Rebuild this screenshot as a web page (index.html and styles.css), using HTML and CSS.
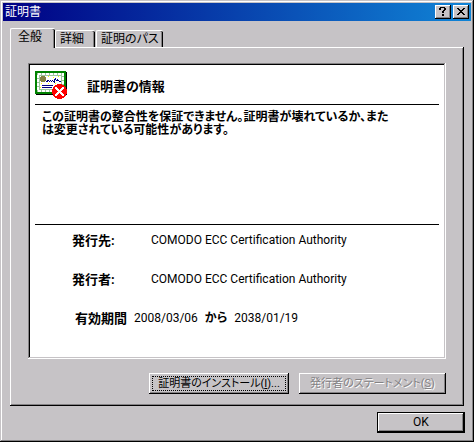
FILE: index.html
```html
<!DOCTYPE html>
<html lang="ja">
<head>
    <meta charset="UTF-8">
    <meta name="viewport" content="width=device-width, initial-scale=1.0">
    <title>証明書</title>
    <link rel="stylesheet" href="styles.css">
</head>
<body>
    <div class="window">
        <header class="titlebar">
            <h1>証明書</h1>
            <button type="button" class="caption-button" aria-label="ヘルプ">
                <svg width="7" height="9" viewBox="0 0 7 9" shape-rendering="crispEdges"><path d="M1 0h5v1H1zM0 1h2v2H0zM5 1h2v2H5zM4 3h2v1H4zM3 4h2v2H3zM3 7h2v2H3z"/></svg>
            </button>
            <button type="button" class="caption-button" aria-label="閉じる">
                <svg width="8" height="7" viewBox="0 0 8 7" shape-rendering="crispEdges"><path d="M0 0h2v1H0zM6 0h2v1H6zM1 1h2v1H1zM5 1h2v1H5zM2 2h4v1H2zM3 3h2v1H3zM2 4h4v1H2zM1 5h2v1H1zM5 5h2v1H5zM0 6h2v1H0zM6 6h2v1H6z"/></svg>
            </button>
        </header>

        <div class="content">
            <div class="tabs" role="tablist">
                <button type="button" class="tab active" role="tab" aria-selected="true">全般</button>
                <button type="button" class="tab" role="tab" aria-selected="false">詳細</button>
                <button type="button" class="tab" role="tab" aria-selected="false">証明のパス</button>
            </div>

            <div class="pane" role="tabpanel">
                <div class="certificate">
                    <div class="certificate-header">
                        <svg class="certificate-icon" width="32" height="28" viewBox="0 0 32 28" shape-rendering="crispEdges">
                            <path fill="#000" d="M1 1h31v23H1z"/>
                            <path fill="#008200" d="M0 0h31v23H0z"/>
                            <path fill="#9cc69c" d="M2 2h27v19H2z"/>
                            <path fill="none" stroke="#fff" stroke-width="2" stroke-dasharray="3 1" d="M3 3h25v17H3z"/>
                            <path fill="#fff" d="M5 5h21v13H5z"/>
                            <path fill="#ffff00" d="M13 5h1v1h-1zM18 6h1v1h-1zM23 5h1v1h-1zM6 12h1v1H6zM13 12h1v1h-1zM20 12h1v1h-1zM5 16h1v1H5z"/>
                            <path fill="#848242" d="M6 5h4v1h1v4h-1v1H6v-1H5V6h1z"/>
                            <path fill="#000084" d="M11 10h2v1h-2zM12 9h2v1h-2zM14 10h1v1h-1zM15 9h1v1h-1zM16 10h1v1h-1zM17 9h1v1h-1zM18 10h1v1h-1zM19 8h1v4h-1zM20 7h1v2h-1zM21 9h1v1h-1zM22 8h1v2h-1zM23 9h1v1h-1zM24 10h2v1h-2zM7 14h11v1H7zM7 16h10v1H7z"/>
                            <path fill="#f00" d="M22 13h5v1h2v1h1v1h1v2h1v5h-1v2h-1v1h-1v1h-2v1h-5v-1h-2v-1h-1v-1h-1v-2h-1v-5h1v-2h1v-1h1v-1h2z"/>
                            <path fill="#fff" d="M20 16h2v1h1v1h1v1h1v-1h1v-1h1v-1h2v2h-1v1h-1v1h-1v1h1v1h1v1h1v2h-2v-1h-1v-1h-1v-1h-1v1h-1v1h-1v1h-2v-2h1v-1h1v-1h1v-1h-1v-1h-1v-1h-1z"/>
                        </svg>
                        <h2>証明書の情報</h2>
                    </div>
                    <p class="message">この証明書の整合性を保証できません。証明書が壊れているか、また<br>は変更されている可能性があります。</p>
                    <dl class="details">
                        <div class="row">
                            <dt>発行先:</dt>
                            <dd>COMODO ECC Certification Authority</dd>
                        </div>
                        <div class="row">
                            <dt>発行者:</dt>
                            <dd>COMODO ECC Certification Authority</dd>
                        </div>
                        <div class="row validity">
                            <dt>有効期間</dt>
                            <dd>2008/03/06 <b>から</b> 2038/01/19</dd>
                        </div>
                    </dl>
                </div>

                <div class="actions">
                    <button type="button" class="button install"><span>証明書のインストール(<u>I</u>)...</span></button>
                    <button type="button" class="button statement" disabled>発行者のステートメント(<u>S</u>)</button>
                </div>
            </div>

            <div class="footer">
                <button type="button" class="button default">OK</button>
            </div>
        </div>
    </div>
</body>
</html>
```
FILE: styles.css
```css
* {
    box-sizing: border-box;
}

body {
    margin: 0;
    background-color: #c6c3c6;
    color: #000;
    font-family: Roboto, "Noto Sans CJK JP", sans-serif;
    font-size: 12px;
    line-height: 13px;
    font-feature-settings: "palt";
}

h1,
h2,
p,
dl,
dd {
    margin: 0;
}

button {
    margin: 0;
    padding: 0;
    border: none;
    background-color: #c6c3c6;
    color: #000;
    font: inherit;
    font-feature-settings: inherit;
    white-space: nowrap;
}

.window {
    display: flex;
    flex-direction: column;
    min-height: 100vh;
    padding: 3px;
    box-shadow: inset -1px -1px #000, inset 1px 1px #c6c3c6, inset -2px -2px #848284, inset 2px 2px #fff;
}

.titlebar {
    display: flex;
    align-items: center;
    gap: 2px;
    height: 18px;
    padding: 0 2px;
    background: linear-gradient(to right, #000084, #1084d6);
}

.titlebar h1 {
    flex: 1;
    color: #fff;
    font-size: 12px;
    font-weight: normal;
}

.caption-button {
    display: flex;
    align-items: center;
    justify-content: center;
    width: 16px;
    height: 14px;
    padding: 0 1px 1px 0;
    box-shadow: inset -1px -1px #000, inset 1px 1px #fff, inset -2px -2px #848284;
}

.content {
    display: flex;
    flex: 1;
    flex-direction: column;
    padding: 7px 6px 6px 7px;
}

.tabs {
    display: flex;
    align-items: flex-end;
    height: 19px;
}

.tab {
    height: 17px;
    padding: 0 11px 0 4px;
    border-top: 1px solid #fff;
    border-left: 1px solid #fff;
    border-radius: 2px 2px 0 0;
    box-shadow: inset -1px 0 #000, inset -2px 0 #848284;
}

.tab + .tab {
    margin-right: 1px;
}

.tab:last-child {
    padding: 0 4px;
}

/* the selected tab covers the top edge of the pane */
.tab.active {
    z-index: 1;
    height: 20px;
    margin-bottom: -1px;
    padding: 0 13px 2px 7px;
}

.pane {
    flex: 1;
    display: flex;
    flex-direction: column;
    margin-right: 1px;
    padding: 16px 18px 12px;
    box-shadow: inset -1px -1px #000, inset 1px 1px #fff, inset -2px -2px #848284;
}

.certificate {
    flex: 1;
    padding: 2px 7px;
    background-color: #fff;
    box-shadow: inset -1px -1px #fff, inset 1px 1px #848284, inset -2px -2px #c6c3c6, inset 2px 2px #000;
}

.certificate-header {
    display: flex;
    align-items: center;
    gap: 20px;
    height: 40px;
    border-bottom: 1px solid #000;
}

.certificate-header h2 {
    padding-top: 4px;
    font-size: 13px;
}

.message {
    min-height: 120px;
    padding: 6px 7px;
    border-bottom: 1px solid #000;
    font-weight: bold;
}

.details {
    padding: 9px 37px 0;
}

.row {
    display: flex;
    height: 39px;
}

.row dt {
    width: 79px;
    font-size: 13px;
    font-weight: bold;
}

.row.validity {
    height: 26px;
    padding-left: 3px;
}

.row.validity dt {
    width: 59px;
}

.row b {
    margin: 0 4px;
}

.actions {
    display: flex;
    justify-content: flex-end;
    gap: 10px;
    padding-top: 14px;
}

.button {
    height: 21px;
    box-shadow: inset -1px -1px #000, inset 1px 1px #fff, inset -2px -2px #848284;
}

.button:disabled {
    color: #848284;
    text-shadow: 1px 1px #fff;
}

.install {
    min-width: 140px;
    padding: 3px;
    font-size: 11px;
}

.install span {
    display: block;
    height: 15px;
    border: 1px dotted #000;
}

.statement {
    min-width: 147px;
    font-size: 11px;
}

.footer {
    display: flex;
    justify-content: flex-end;
    padding-top: 6px;
}

.button.default {
    width: 88px;
    border: 1px solid #000;
}
```
